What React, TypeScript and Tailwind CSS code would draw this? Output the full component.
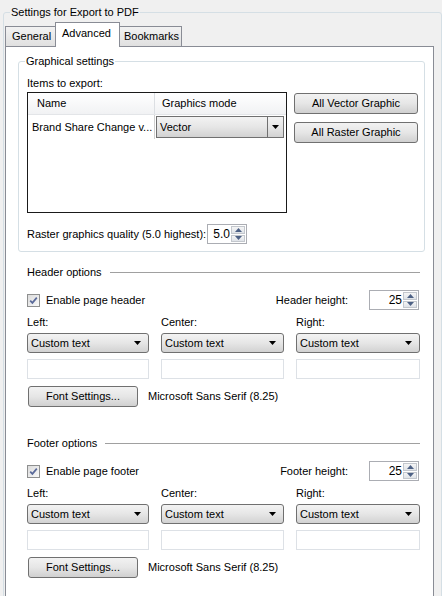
import React from 'react'

function Arrow() {
  return (
    <svg width="7" height="4" viewBox="0 0 7 4" className="shrink-0">
      <path d="M0 0 H7 L3.5 4 Z" fill="#000" />
    </svg>
  )
}

function Combo({ text }: { text: string }) {
  return (
    <div className="h-[20px] flex items-center justify-between pl-[3px] pr-[7px] border border-[#707070] rounded-[3px] bg-linear-to-b from-[#f3f3f3] via-[#e6e6e6] to-[#d2d2d2]">
      <span className="leading-[13px]">{text}</span>
      <Arrow />
    </div>
  )
}

function TextBox() {
  return <div className="h-[20px] border border-[#dde1e6] bg-white" />
}

function WinButton({ label, className }: { label: string; className?: string }) {
  return (
    <div
      className={
        'h-[21px] flex items-center justify-center border border-[#707070] rounded-[3px] bg-linear-to-b from-[#f2f2f2] via-[#e6e6e6] to-[#d0d0d0] ' +
        (className ?? '')
      }
    >
      <span className="leading-[13px]">{label}</span>
    </div>
  )
}

function SpinArrow({ up }: { up?: boolean }) {
  return (
    <div className="flex-1 flex items-center justify-center border border-[#c3c7cd] bg-linear-to-b from-[#f5f5f5] to-[#dfe3e8]">
      <svg width="7" height="4" viewBox="0 0 7 4">
        <path d={up ? 'M0 4 H7 L3.5 0 Z' : 'M0 0 H7 L3.5 4 Z'} fill="#4d6185" />
      </svg>
    </div>
  )
}

function Spinner({ value, className }: { value: string; className: string }) {
  return (
    <div className={'h-[20px] flex border border-[#abadb3] bg-white ' + className}>
      <div className="flex-1 flex items-center justify-end pr-[1px] leading-[13px] text-[12px]">{value}</div>
      <div className="w-[15px] flex flex-col gap-[1px] py-[1px] pr-[1px]">
        <SpinArrow up />
        <SpinArrow />
      </div>
    </div>
  )
}

function CheckBox() {
  return (
    <div className="w-[13px] h-[13px] border border-[#8e8f8f] bg-linear-to-br from-[#dcdcdc] to-[#f8f8f8] flex items-center justify-center">
      <svg width="11" height="11" viewBox="0 0 11 11">
        <path d="M2.2 5.6 L4.4 7.9 L8.8 2.6" fill="none" stroke="#5a6a9a" strokeWidth="1.7" />
      </svg>
    </div>
  )
}

function Section({ title, check, heightLabel, className }: { title: string; check: string; heightLabel: string; className: string }) {
  return (
    <div className={className}>
      <div className="h-[13px] flex items-center">
        <span className="leading-[13px]">{title}</span>
        <div className="flex-1 h-px bg-[#a0a0a0] ml-[8px]" />
      </div>
      <div className="mt-[11px] h-[20px] flex items-center justify-between">
        <div className="flex items-center gap-[6px]">
          <CheckBox />
          <span className="leading-[13px]">{check}</span>
        </div>
        <div className="flex items-center gap-[21px]">
          <span className="leading-[13px]">{heightLabel}</span>
          <Spinner value="25" className="w-[50px] mr-[1px]" />
        </div>
      </div>
      <div className="grid grid-cols-[122px_123px_124px] gap-x-[12px]">
        <span className="mt-[6px] leading-[13px]">Left:</span>
        <span className="mt-[6px] leading-[13px]">Center:</span>
        <span className="mt-[6px] leading-[13px]">Right:</span>
        <div className="mt-[4px]"><Combo text="Custom text" /></div>
        <div className="mt-[4px]"><Combo text="Custom text" /></div>
        <div className="mt-[4px]"><Combo text="Custom text" /></div>
        <div className="mt-[6px]"><TextBox /></div>
        <div className="mt-[6px]"><TextBox /></div>
        <div className="mt-[6px]"><TextBox /></div>
      </div>
      <div className="mt-[7px] flex items-center gap-[10px]">
        <WinButton label="Font Settings..." className="w-[110px] ml-[1px]" />
        <span className="leading-[13px]">Microsoft Sans Serif (8.25)</span>
      </div>
    </div>
  )
}

export default function App() {
  return (
    <div className="w-[442px] h-[596px] overflow-hidden bg-[#f0f0f0] text-[11px] text-black font-['Liberation_Sans',Arial,sans-serif]">
      {/* outer group */}
      <div className="relative ml-[3px] mt-[12px] w-[439px] h-[620px] border border-[#d5dfe5] rounded-[3px] pt-[9px]">
        <span className="absolute left-[6px] -top-[7px] px-[1px] bg-[#f0f0f0] leading-[13px]">Settings for Export to PDF</span>

        {/* tabs */}
        <div className="ml-[1px] h-[24px] flex items-end">
          <div className="w-[51px] h-[20px] pl-[6px] flex items-center border border-b-0 border-[#898c95] bg-linear-to-b from-[#f2f2f2] to-[#e0e0e0]">
            General
          </div>
          <div className="relative z-10 -mb-px -ml-px w-[65px] h-[25px] pl-[6px] pb-[3px] flex items-center border border-b-0 border-[#898c95] bg-white">
            Advanced
          </div>
          <div className="w-[62px] h-[20px] pl-[4px] flex items-center border border-b-0 border-l-0 border-[#898c95] bg-linear-to-b from-[#f2f2f2] to-[#e0e0e0]">
            Bookmarks
          </div>
        </div>

        {/* tab panel */}
        <div className="ml-[1px] w-[429px] h-[600px] border border-[#898c95] bg-white pl-[12px] pt-[14px]">
          <div className="relative w-[407px] border border-[#d5dfe5] rounded-[3px] pl-[8px] pt-[15px] pb-[7px]">
            <span className="absolute left-[6px] -top-[7px] px-[1px] bg-white leading-[13px]">Graphical settings</span>
            <div className="leading-[13px]">Items to export:</div>
            <div className="mt-[2px] flex gap-[7px]">
              <div className="w-[260px] h-[121px] border border-[#1a1a1a] bg-white">
                <div className="h-[22px] flex border-b border-[#e3e5e8] bg-linear-to-b from-[#ffffff] to-[#f1f2f4]">
                  <div className="w-[127px] pl-[9px] flex items-center border-r border-[#dcdfe3]">Name</div>
                  <div className="pl-[7px] flex items-center">Graphics mode</div>
                </div>
                <div className="h-[24px] flex">
                  <div className="w-[127px] pl-[4px] flex items-center border-r border-[#d0d0d0]">Brand Share Change v...</div>
                  <div className="ml-[1px] mt-[1px] w-[128px] h-[22px] flex border border-[#707070] bg-linear-to-b from-[#f3f3f3] via-[#e6e6e6] to-[#d2d2d2]">
                    <div className="flex-1 pl-[3px] flex items-center">Vector</div>
                    <div className="w-[16px] flex items-center justify-center border-l border-[#707070]">
                      <Arrow />
                    </div>
                  </div>
                </div>
              </div>
              <div className="mt-[1px] w-[124px] flex flex-col gap-[8px]">
                <WinButton label="All Vector Graphic" />
                <WinButton label="All Raster Graphic" />
              </div>
            </div>
            <div className="mt-[11px] flex items-center">
              <span className="w-[180px] leading-[13px]">Raster graphics quality (5.0 highest):</span>
              <Spinner value="5.0" className="w-[40px]" />
            </div>
          </div>

          <div className="ml-[9px] w-[393px]">
            <Section title="Header options" check="Enable page header" heightLabel="Header height:" className="mt-[14px]" />
            <Section title="Footer options" check="Enable page footer" heightLabel="Footer height:" className="mt-[30px]" />
          </div>
        </div>
      </div>
    </div>
  )
}
